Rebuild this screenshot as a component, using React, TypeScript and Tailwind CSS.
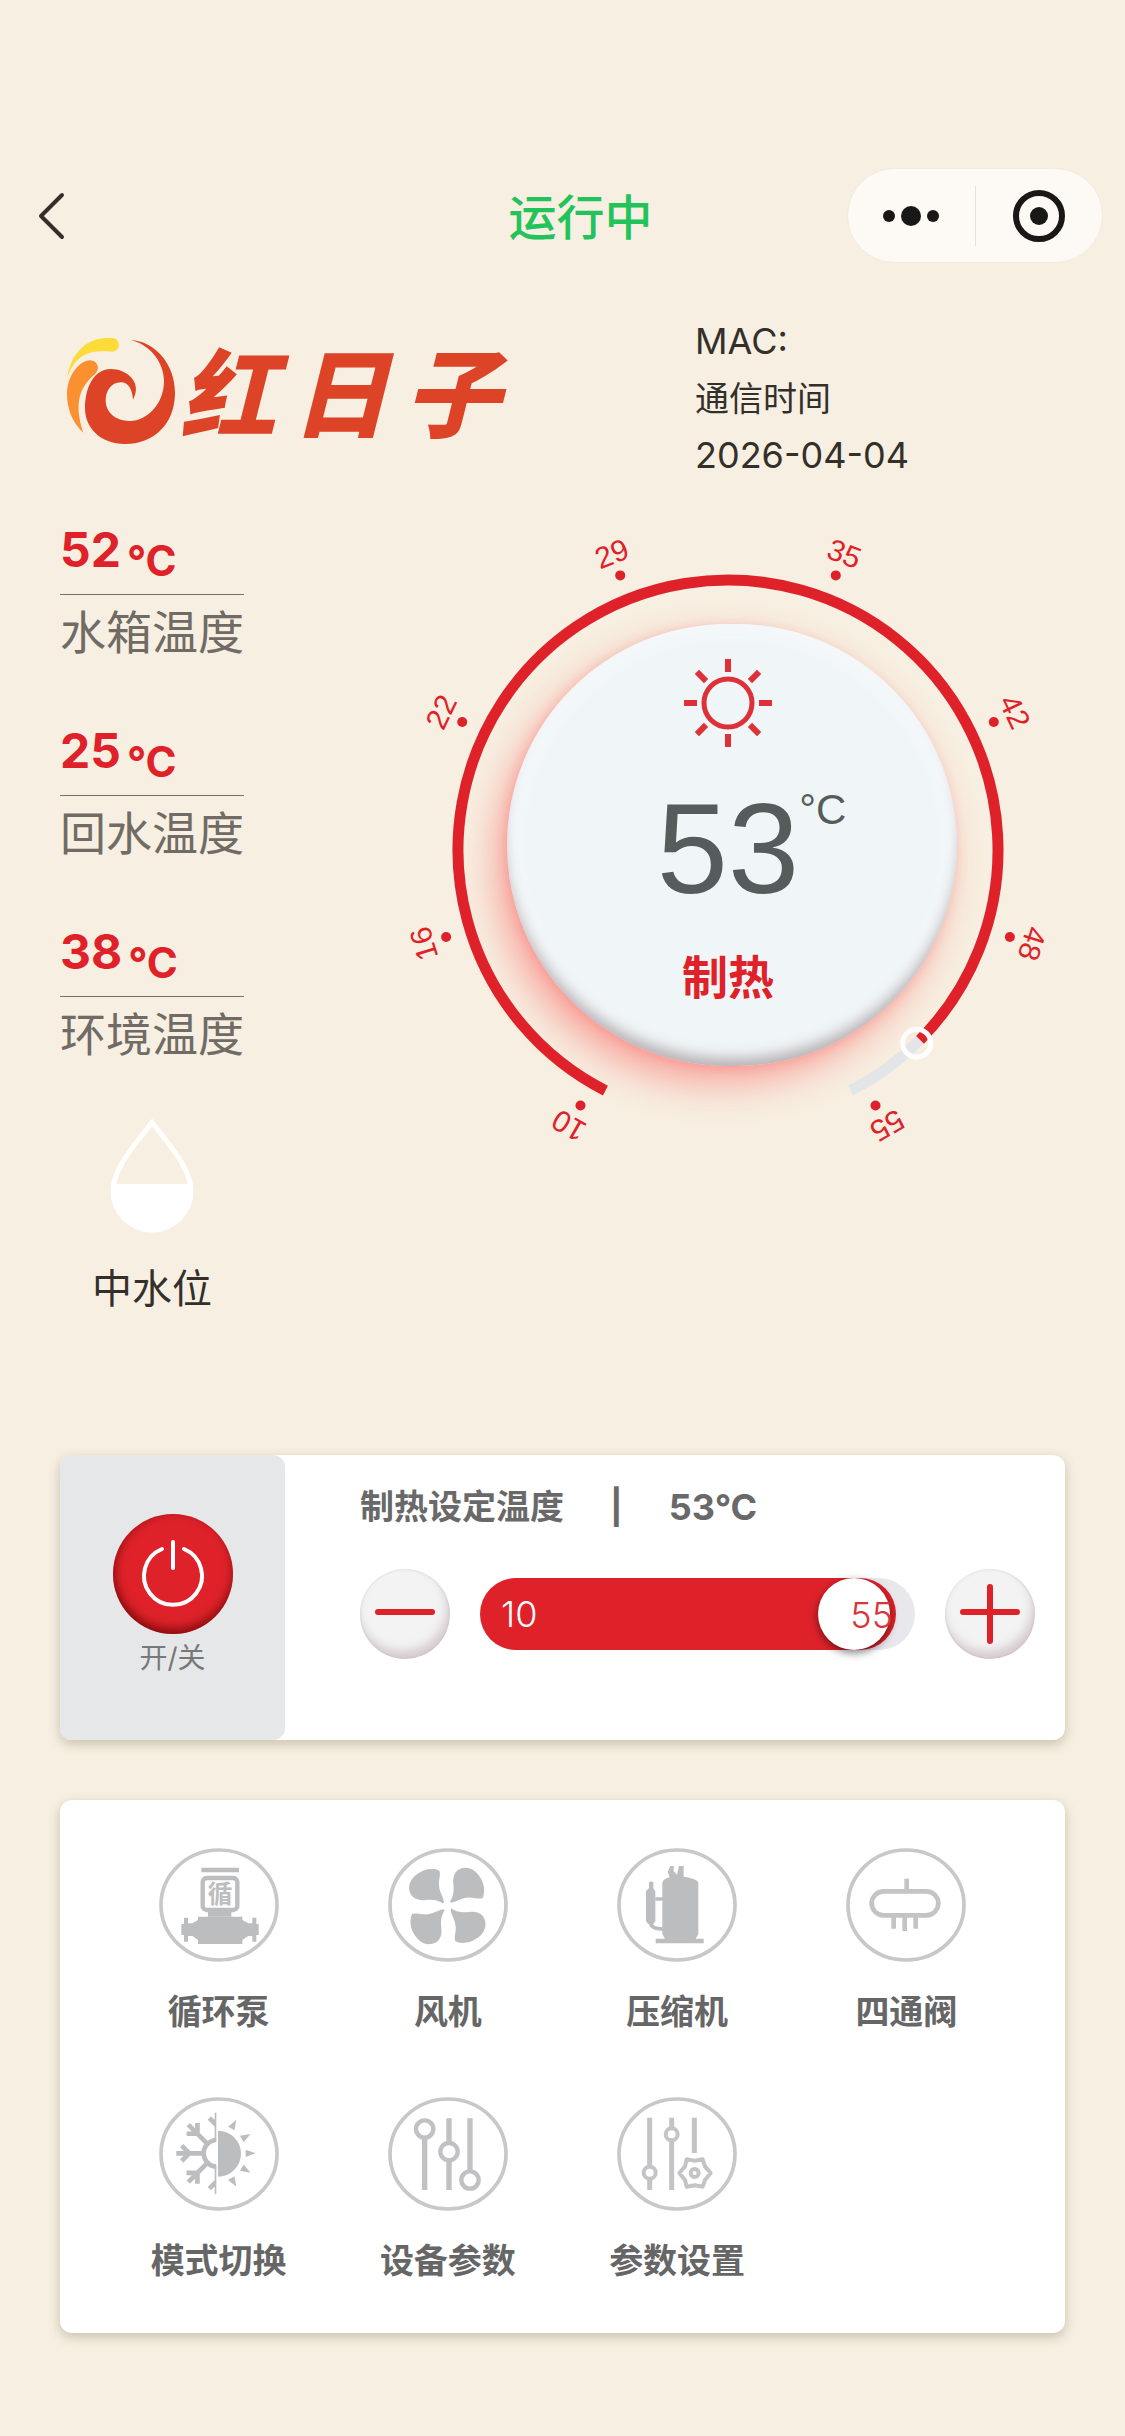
import { useState, type ReactNode } from 'react'
import clsx from 'clsx'

const MIN_TEMP = 10
const MAX_TEMP = 55

interface Sensor {
  name: string
  value: number
}

const sensors: Sensor[] = [
  { name: '水箱温度', value: 52 },
  { name: '回水温度', value: 25 },
  { name: '环境温度', value: 38 }
]

const ticks = [10, 16, 22, 29, 35, 42, 48, 55]

function BrandLogo (): React.JSX.Element {
  return (
    <div className="flex items-center gap-1 pt-6">
      <svg viewBox="78 48 330 324" className="h-[108px] w-[110px]" aria-hidden="true">
        <path fill="#fddc3a" d="M82 170C90 110 130 51 200 51H215C243 51 245 91 215 92C170 90 112 84 82 170Z" />
        <path fill="#fb9030" d="M130 335C95 302 80 260 81 215C84 160 120 118 150 118C176 120 180 145 165 160C125 192 98 240 130 335Z" />
        <path fill="#dc4327" d="M272 57C345 60 405 130 405 215C405 310 340 369 255 369C180 369 135 320 135 262C135 195 165 144 212 144C262 144 308 185 279 236C277 205 265 184 243 184C212 184 197 212 197 238C197 275 228 300 268 300C325 300 372 245 372 180C372 125 330 70 272 57Z" />
      </svg>
      <p className="flex gap-4 pt-2 text-[96px] leading-[92px] font-black text-[#dc4327] italic">
        <span>红</span>
        <span>日</span>
        <span>子</span>
      </p>
    </div>
  )
}

function SensorReading ({ name, value }: Sensor): React.JSX.Element {
  return (
    <div>
      <div className="flex h-[65px] gap-[6px] border-b border-[#77716a] font-bold text-[#df222a]">
        <span className="text-[48px] leading-[40px]">{value}</span>
        <span className="text-[42px] leading-[62px]">°C</span>
      </div>
      <p className="text-[46px] leading-[74px] text-[#706b65]">{name}</p>
    </div>
  )
}

function WaterDrop (): React.JSX.Element {
  return (
    <svg viewBox="0 0 84 114" className="h-[114px] w-[84px]" aria-hidden="true">
      <path d="M42 3C34 16 3 46 3 72A39 39 0 0 0 81 72C81 46 50 16 42 3Z" fill="none" stroke="#fff" strokeWidth="5" strokeLinejoin="round" />
      <path d="M3 65H81V72A39 39 0 0 1 3 72Z" fill="#fff" />
    </svg>
  )
}

// angle is measured clockwise from the bottom of the dial
function pointAt (angle: number, radius: number): { x: number, y: number } {
  const rad = angle * Math.PI / 180
  return { x: 338 - radius * Math.sin(rad), y: 330 + radius * Math.cos(rad) }
}

function arc (from: number, to: number, radius: number): string {
  const start = pointAt(from, radius)
  const end = pointAt(to, radius)
  return `M${start.x} ${start.y}A${radius} ${radius} 0 ${to - from > 180 ? 1 : 0} 1 ${end.x} ${end.y}`
}

function Sun (): React.JSX.Element {
  return (
    <svg viewBox="0 0 92 92" className="h-[92px] w-[92px]" fill="none" stroke="#dd3038" aria-hidden="true">
      <circle cx="46" cy="46" r="24" strokeWidth="5" />
      {[0, 45, 90, 135, 180, 225, 270, 315].map(angle => (
        <path key={angle} d="M46 2V15" strokeWidth="6" transform={`rotate(${angle} 46 46)`} />
      ))}
    </svg>
  )
}

function Dial ({ temp }: { temp: number }): React.JSX.Element {
  const angle = 30 + (temp - MIN_TEMP) / (MAX_TEMP - MIN_TEMP) * 300 - 2
  const handle = pointAt(angle + 1, 270)

  return (
    <div className="grid h-[640px] w-[680px] place-items-center">
      <svg viewBox="0 0 680 640" className="h-full w-full [grid-area:1/1]" aria-hidden="true">
        <path d={arc(angle, 333, 270)} fill="none" stroke="#e3e6e8" strokeWidth="11" />
        <path d={arc(27, angle, 270)} fill="none" stroke="#df222a" strokeWidth="11" />
        <circle cx={handle.x} cy={handle.y} r="14" fill="none" stroke="#fff" strokeWidth="5" />
        {ticks.map((tick, i) => {
          const tickAngle = 30 + i * 300 / 7
          const dot = pointAt(tickAngle, 295)
          const label = pointAt(tickAngle, 318)
          return (
            <g key={tick} fill="#df222a">
              <circle cx={dot.x} cy={dot.y} r="5" />
              <text
                x={label.x}
                y={label.y}
                dy="10"
                textAnchor="middle"
                className="font-['Liberation_Sans',sans-serif] text-[30px]"
                transform={`rotate(${tickAngle + 180} ${label.x} ${label.y})`}
              >
                {tick}
              </text>
            </g>
          )
        })}
      </svg>
      <div className="mt-[10px] ml-1 flex h-[442px] w-[450px] flex-col items-center rounded-full bg-[#f0f6f7] pt-[33px] pr-2 shadow-[-12px_18px_36px_rgba(250,80,80,0.45),-2px_2px_12px_rgba(250,90,90,0.25),inset_0_-12px_14px_-4px_rgba(90,70,75,0.4),inset_0_0_24px_rgba(250,250,255,1)] [grid-area:1/1]">
        <Sun />
        <p className="relative mt-9 font-['Liberation_Sans',sans-serif] text-[128px] leading-[128px] text-[#565b5c]">
          {temp}
          <span className="absolute top-1 left-full text-[42px] leading-[42px]">°C</span>
        </p>
        <p className="mt-9 text-[46px] leading-[56px] font-bold text-[#df222a]">制热</p>
      </div>
    </div>
  )
}

interface RoundButtonProps {
  label: string
  onClick: () => void
  children: ReactNode
}

function RoundButton ({ label, onClick, children }: RoundButtonProps): React.JSX.Element {
  return (
    <button
      type="button"
      aria-label={label}
      onClick={onClick}
      className="flex h-[90px] w-[90px] shrink-0 items-center justify-center rounded-full bg-[#f3f3f4] shadow-[inset_-3px_-8px_10px_rgba(160,130,140,0.35),inset_0_0_3px_rgba(0,0,0,0.12)]"
    >
      <svg viewBox="0 0 60 60" className="h-[60px] w-[60px]" fill="none" stroke="#df222a" strokeWidth="6" strokeLinecap="round">
        {children}
      </svg>
    </button>
  )
}

function FeatureIcon ({ children }: { children: ReactNode }): React.JSX.Element {
  return (
    <svg viewBox="0 0 360 342" className="h-[114px] w-[120px]" aria-hidden="true">
      <ellipse cx="180" cy="171" rx="174" ry="165" fill="none" stroke="#c8c8ca" strokeWidth="11" />
      {children}
    </svg>
  )
}

const features: Array<{ name: string, icon: ReactNode }> = [
  {
    name: '循环泵',
    icon: (
      <g fill="#bcbdbf">
        <path d="M127 59H240V73H127ZM147 188H217V206H147Z" />
        <path d="M117 206H250V216L268 226H280V209H292V228H299V261H292V281H280V264H268L250 276V288H117V276L100 264H87V281H75V261H67V228H75V209H87V226H100L117 216Z" />
        <rect x="131" y="90" width="104" height="96" rx="12" fill="none" stroke="#bcbdbf" strokeWidth="13" />
        <text x="183" y="165" textAnchor="middle" className="text-[74px] font-bold">循</text>
      </g>
    )
  },
  {
    name: '风机',
    icon: (
      <g fill="#bcbdbf">
        {[0, 90, 180, 270].map(angle => (
          <path key={angle} d="M154 68C118 52 70 80 64 112C60 142 80 160 112 156C138 153 154 158 168 168C170 148 150 132 153 102C154 88 158 78 154 68Z" transform={`rotate(${angle} 178 174)`} />
        ))}
        <circle cx="178" cy="174" r="15" fill="#fff" />
      </g>
    )
  },
  {
    name: '压缩机',
    icon: (
      <g fill="#bcbdbf">
        <path d="M136 104Q138 94 158 88L152 72L160 54H170V70L180 80L186 54H200V86Q244 92 244 106V258L236 272H260V286H116V272H144L136 258Z" />
        <path d="M96 101H109V120L115 130V220L109 228H94L87 220V130L96 120Z" />
        <path d="M115 153H138M101 224Q102 243 138 243" fill="none" stroke="#bcbdbf" strokeWidth="11" />
      </g>
    )
  },
  {
    name: '四通阀',
    icon: (
      <g fill="none" stroke="#c3c4c6" strokeWidth="14">
        <rect x="77" y="130" width="200" height="72" rx="36" />
        <path d="M182 92V130M143 206V242M176 206V249M209 206V242" />
      </g>
    )
  },
  {
    name: '模式切换',
    icon: (
      <g fill="#bcbdbf">
        <path d="M177 101A68 68 0 0 1 177 239Z" />
        {[-60, -30, 0, 30, 60].map(angle => (
          <path key={angle} d="M260 158L290 169L260 180Z" transform={`rotate(${angle} 174 169)`} />
        ))}
        <g fill="none" stroke="#bcbdbf" strokeWidth="14" clipPath="url(#left-half)">
          <circle cx="174" cy="169" r="40" />
          {[0, 45, 90, -45, -90].map(angle => (
            <path key={angle} d="M134 169H52M68 146L91 169L68 192" transform={`rotate(${angle} 174 169)`} />
          ))}
        </g>
        <clipPath id="left-half">
          <rect x="0" y="0" width="172" height="342" />
        </clipPath>
      </g>
    )
  },
  {
    name: '设备参数',
    icon: (
      <g fill="none" stroke="#c0c1c3" strokeWidth="16">
        <path d="M110 122V279M183 64V138M183 190V279M246 64V222" />
        <g strokeWidth="13">
          <circle cx="110" cy="96" r="26" />
          <circle cx="183" cy="164" r="26" />
          <circle cx="246" cy="249" r="26" />
        </g>
      </g>
    )
  },
  {
    name: '参数设置',
    icon: (
      <g fill="none" stroke="#c4c4c6" strokeWidth="15" strokeLinejoin="round">
        <path d="M98 62V208M98 246V279M164 62V93M164 131V279M232 62V168" />
        <g strokeWidth="12">
          <circle cx="98" cy="227" r="18" />
          <circle cx="164" cy="112" r="18" />
          <path d="M187 228L204 208L209 187L233 191L257 187L264 208L281 228L264 249L257 269L233 265L209 269L204 249Z" />
          <circle cx="233" cy="228" r="12" />
        </g>
      </g>
    )
  }
]

export default function App (): React.JSX.Element {
  const [target, setTarget] = useState(53)
  const [running, setRunning] = useState(true)

  function changeTarget (value: number) {
    setTarget(Math.min(MAX_TEMP, Math.max(MIN_TEMP, value)))
  }

  return (
    <main className="min-h-screen bg-[#f7efe1] pt-[168px] pb-[100px] font-[Inter,'Noto_Sans_CJK_SC',sans-serif] text-[#33302c]">
      <header className="grid grid-cols-[1fr_auto_1fr] items-center pr-[22px] pl-[38px]">
        <button type="button" aria-label="返回" className="w-7">
          <svg viewBox="0 0 28 48" className="h-12 w-7" fill="none" stroke="#33302c" strokeWidth="4" strokeLinecap="round" strokeLinejoin="round">
            <path d="M24 3L3 24L24 45" />
          </svg>
        </button>
        <h1 className="pt-1 pl-5 text-[48px] leading-[56px] font-medium text-[#22c35b]">{running ? '运行中' : '已关机'}</h1>
        <div className="flex h-[95px] w-64 items-center justify-self-end rounded-full border border-[#f1eadf] bg-[#fdf9f4]">
          <button type="button" aria-label="更多" className="flex h-full flex-1 items-center justify-center">
            <svg viewBox="0 0 60 24" className="h-6 w-[60px]" fill="#191817">
              <circle cx="8" cy="12" r="6" />
              <circle cx="30" cy="12" r="10" />
              <circle cx="52" cy="12" r="6" />
            </svg>
          </button>
          <span className="h-[60px] w-px bg-[#e6e1da]" />
          <button type="button" aria-label="关闭" className="flex h-full flex-1 items-center justify-center">
            <svg viewBox="0 0 54 54" className="h-[54px] w-[54px]">
              <circle cx="27" cy="27" r="23" fill="none" stroke="#191817" strokeWidth="6" />
              <circle cx="27" cy="27" r="9" fill="#191817" />
            </svg>
          </button>
        </div>
      </header>

      <section className="mt-[50px] flex items-start justify-between pl-[66px]">
        <BrandLogo />
        <div className="w-[430px] text-[36px] leading-[57px]">
          <p>MAC:</p>
          <p className="text-[34px]">通信时间</p>
          <p>2026-04-04</p>
        </div>
      </section>

      <section className="mt-9 flex justify-between pr-[55px] pl-[60px]">
        <div className="w-[184px] pt-[10px]">
          <div className="flex flex-col gap-[62px]">
            {sensors.map(sensor => <SensorReading key={sensor.name} {...sensor} />)}
          </div>
          <div className="mt-12 flex flex-col items-center">
            <WaterDrop />
            <p className="mt-8 text-[40px] leading-[48px]">中水位</p>
          </div>
        </div>
        <Dial temp={target} />
      </section>

      <section className="mx-[60px] mt-[142px] flex h-[285px] rounded-xl bg-white shadow-[0_4px_12px_rgba(90,90,60,0.3)]">
        <div className="flex w-[225px] shrink-0 flex-col items-center rounded-xl bg-[#e6e7e9] pt-[59px]">
          <button
            type="button"
            id="power"
            onClick={() => { setRunning(!running) }}
            className={clsx(
              'flex h-[120px] w-[120px] items-center justify-center rounded-full shadow-[inset_0_-6px_10px_rgba(90,0,0,0.55),inset_4px_0_8px_rgba(90,0,0,0.25)]',
              running ? 'bg-[#df222a]' : 'bg-[#9b9b9b]'
            )}
          >
            <svg viewBox="0 0 68 68" className="h-[68px] w-[68px]" fill="none" stroke="#fff" strokeWidth="4" strokeLinecap="round">
              <path d="M34 2V28" />
              <path d="M23 9A29 29 0 1 0 45 9" />
            </svg>
          </button>
          <label htmlFor="power" className="text-[28px] leading-[48px] text-[#77787a]">开/关</label>
        </div>

        <div className="flex-1 pt-[30px] pr-[30px] pl-[75px]">
          <h2 className="flex gap-[46px] text-[34px] leading-[44px] font-bold text-[#696969]">
            <span>制热设定温度</span>
            <span>|</span>
            <span className="text-[36px]">{target}°C</span>
          </h2>
          <div className="mt-10 flex items-center gap-[30px]">
            <RoundButton label="降低温度" onClick={() => { changeTarget(target - 1) }}>
              <path d="M3 28H57" />
            </RoundButton>
            <div className="relative h-[72px] flex-1 rounded-full bg-[#e8e8ec]">
              <div
                className="flex h-full min-w-[150px] items-center justify-between rounded-full bg-[#df222a] pl-[21px]"
                style={{ width: `${(target - MIN_TEMP) / (MAX_TEMP - MIN_TEMP) * 100}%` }}
              >
                <span className="text-[36px] font-light text-white">{MIN_TEMP}</span>
                <span className="mr-[6px] h-[72px] w-[72px] rounded-full bg-white shadow-[0_3px_8px_rgba(0,0,0,0.5)]" />
              </div>
              <span className="absolute top-0 right-[22px] text-[36px] leading-[74px] font-light text-[#d8363c]">{MAX_TEMP}</span>
              <input
                type="range"
                aria-label="制热设定温度"
                min={MIN_TEMP}
                max={MAX_TEMP}
                value={target}
                onChange={event => { changeTarget(Number(event.target.value)) }}
                className="absolute inset-0 h-full w-full cursor-pointer opacity-0"
              />
            </div>
            <RoundButton label="升高温度" onClick={() => { changeTarget(target + 1) }}>
              <path d="M3 28H57M30 3V57" />
            </RoundButton>
          </div>
        </div>
      </section>

      <section className="mx-[60px] mt-[60px] grid grid-cols-4 gap-y-[61px] rounded-xl bg-white px-11 pt-12 pb-12 shadow-[0_4px_12px_rgba(90,90,60,0.3)]">
        {features.map(feature => (
          <button key={feature.name} type="button" className="flex flex-col items-center gap-[26px]">
            <FeatureIcon>{feature.icon}</FeatureIcon>
            <span className="text-[34px] leading-[48px] font-bold text-[#666666]">{feature.name}</span>
          </button>
        ))}
      </section>
    </main>
  )
}
